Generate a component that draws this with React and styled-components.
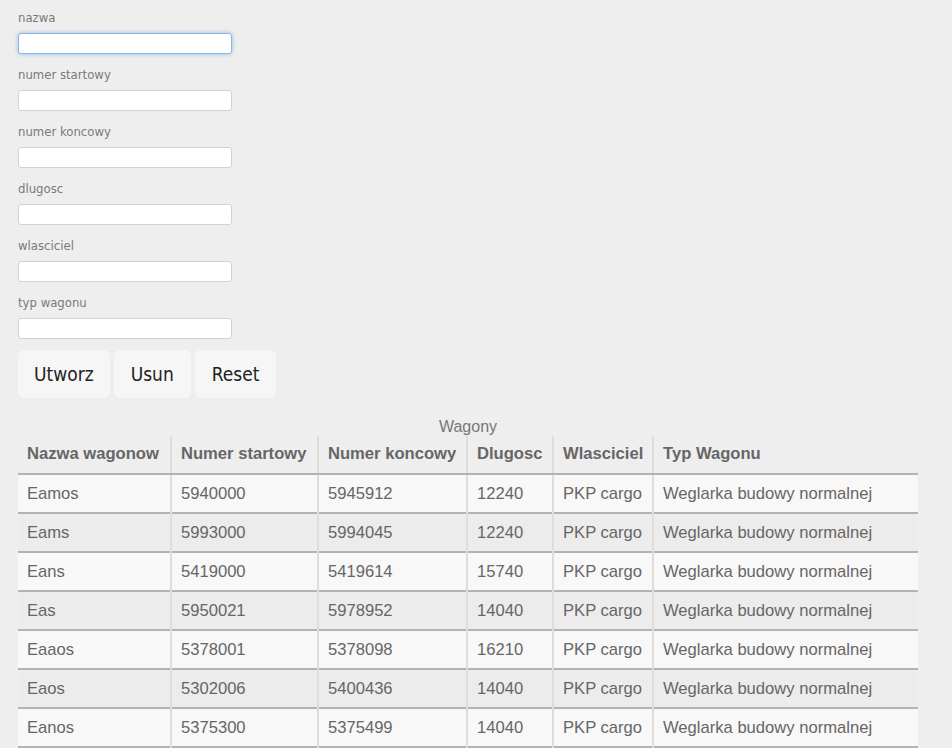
import React from "react";
import styled, { createGlobalStyle } from "styled-components";

const GlobalStyle = createGlobalStyle`
  body {
    margin: 0;
    background: #eeeeee;
  }
`;

const Page = styled.div`
  padding: 8px 18px 0 18px;
`;

const Form = styled.form`
  display: flex;
  flex-direction: column;
  width: 260px;
`;

const Label = styled.label`
  font-family: "DejaVu Sans Condensed", "DejaVu Sans", sans-serif;
  font-size: 13px;
  color: #7a7a7a;
  line-height: 19px;
  margin-bottom: 6px;
`;

const Input = styled.input`
  box-sizing: border-box;
  width: 214px;
  height: 21px;
  margin: 0 0 11px 0;
  padding: 0 6px;
  border: 1px solid ${(p) => (p.$focused ? "#8ab8e6" : "#d2d2d2")};
  border-radius: 3px;
  background: #fff;
  box-shadow: ${(p) => (p.$focused ? "0 0 4px rgba(90, 150, 220, 0.6)" : "none")};
  outline: none;
  font-size: 14px;
`;

const Buttons = styled.div`
  display: flex;
  gap: 4px;
`;

const Button = styled.button`
  height: 48px;
  padding: 0 ${(p) => p.$pad}px;
  border: none;
  border-radius: 6px;
  background: #f6f6f6;
  font-family: "DejaVu Sans Condensed", "DejaVu Sans", sans-serif;
  font-size: 19px;
  color: #222;
  cursor: pointer;
`;

const Table = styled.table`
  margin-top: 20px;
  width: 900px;
  table-layout: fixed;
  border-collapse: collapse;
  font-family: "Liberation Sans", Arial, sans-serif;
  font-size: 16.6px;
  color: #666;
  white-space: nowrap;
`;

const Caption = styled.caption`
  font-size: 16px;
  color: #777;
  line-height: 18px;
`;

const Th = styled.th`
  text-align: left;
  font-weight: bold;
  line-height: 20px;
  padding: 8px 9px 9px 9px;
  border-left: 2px solid #dddddd;
  border-bottom: 2px solid #b3b3b3;
  &:first-child {
    border-left: none;
  }
`;

const Row = styled.tr`
  background: ${(p) => (p.$odd ? "#f8f8f8" : "#ececec")};
  border-bottom: 2px solid #b3b3b3;
`;

const Td = styled.td`
  padding: 9px 9px 8px 9px;
  line-height: 20px;
  border-left: 2px solid #dddddd;
  &:first-child {
    border-left: none;
  }
`;

const fields = [
  "nazwa",
  "numer startowy",
  "numer koncowy",
  "dlugosc",
  "wlasciciel",
  "typ wagonu",
];

const columns = [
  { title: "Nazwa wagonow", width: 153 },
  { title: "Numer startowy", width: 147 },
  { title: "Numer koncowy", width: 149 },
  { title: "Dlugosc", width: 86 },
  { title: "Wlasciciel", width: 100 },
  { title: "Typ Wagonu", width: 265 },
];

const wagons = [
  ["Eamos", "5940000", "5945912", "12240"],
  ["Eams", "5993000", "5994045", "12240"],
  ["Eans", "5419000", "5419614", "15740"],
  ["Eas", "5950021", "5978952", "14040"],
  ["Eaaos", "5378001", "5378098", "16210"],
  ["Eaos", "5302006", "5400436", "14040"],
  ["Eanos", "5375300", "5375499", "14040"],
];

export default function App() {
  return (
    <Page>
      <GlobalStyle />
      <Form onSubmit={(e) => e.preventDefault()}>
        {fields.map((f, i) => (
          <React.Fragment key={f}>
            <Label>{f}</Label>
            <Input $focused={i === 0} />
          </React.Fragment>
        ))}
        <Buttons>
          <Button type="button" $pad={16}>Utworz</Button>
          <Button type="button" $pad={17}>Usun</Button>
          <Button type="button" $pad={17}>Reset</Button>
        </Buttons>
      </Form>
      <Table>
        <Caption>Wagony</Caption>
        <colgroup>
          {columns.map((c) => (
            <col key={c.title} style={{ width: c.width }} />
          ))}
        </colgroup>
        <thead>
          <tr>
            {columns.map((c) => (
              <Th key={c.title}>{c.title}</Th>
            ))}
          </tr>
        </thead>
        <tbody>
          {wagons.map((w, i) => (
            <Row key={w[0]} $odd={i % 2 === 0}>
              {w.map((v, j) => (
                <Td key={j}>{v}</Td>
              ))}
              <Td>PKP cargo</Td>
              <Td>Weglarka budowy normalnej</Td>
            </Row>
          ))}
        </tbody>
      </Table>
    </Page>
  );
}
